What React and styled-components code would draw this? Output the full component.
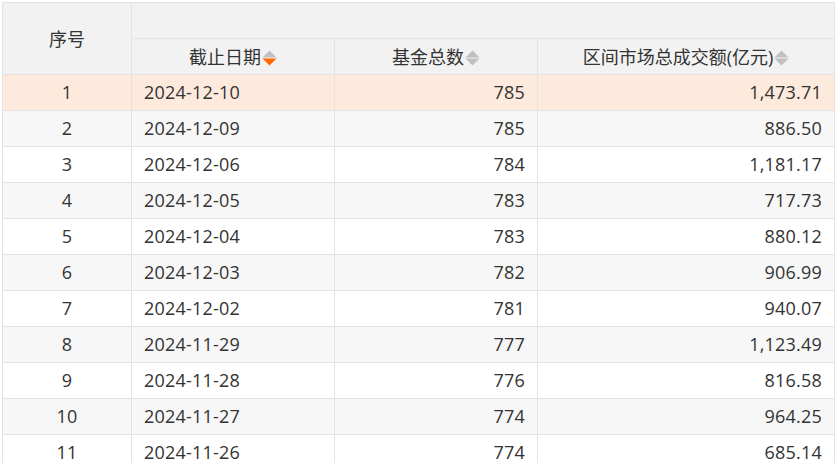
import styled, { createGlobalStyle } from 'styled-components'

const rows = [
  ['2024-12-10', '785', '1,473.71'],
  ['2024-12-09', '785', '886.50'],
  ['2024-12-06', '784', '1,181.17'],
  ['2024-12-05', '783', '717.73'],
  ['2024-12-04', '783', '880.12'],
  ['2024-12-03', '782', '906.99'],
  ['2024-12-02', '781', '940.07'],
  ['2024-11-29', '777', '1,123.49'],
  ['2024-11-28', '776', '816.58'],
  ['2024-11-27', '774', '964.25'],
  ['2024-11-26', '774', '685.14'],
]

function SortIcon({ active }) {
  return (
    <SortSvg viewBox="0 0 15 16" width="15" height="16">
      <path d="M0.5 7.5 L7.5 0.5 L14.5 7.5 Z" fill="#c0c0c0" />
      <path d="M0.5 8.5 L7.5 15.5 L14.5 8.5 Z" fill={active ? '#ff6a00' : '#c0c0c0'} />
    </SortSvg>
  )
}

export default function App() {
  return (
    <>
      <GlobalStyle />
      <Wrap>
        <Table>
          <colgroup>
            <col style={{ width: 129 }} />
            <col style={{ width: 203 }} />
            <col style={{ width: 203 }} />
            <col style={{ width: 297 }} />
          </colgroup>
          <thead>
            <tr>
              <Th rowSpan={2}>序号</Th>
              <Th colSpan={3}></Th>
            </tr>
            <tr>
              <Th>截止日期<SortIcon active /></Th>
              <Th>基金总数<SortIcon /></Th>
              <Th>区间市场总成交额(亿元)<SortIcon /></Th>
            </tr>
          </thead>
          <tbody>
            {rows.map((r, i) => (
              <Tr key={i} $highlight={i === 0} $striped={i % 2 === 1}>
                <Td $align="center">{i + 1}</Td>
                <Td $align="left">{r[0]}</Td>
                <Td $align="right">{r[1]}</Td>
                <Td $align="right">{r[2]}</Td>
              </Tr>
            ))}
          </tbody>
        </Table>
      </Wrap>
    </>
  )
}

const GlobalStyle = createGlobalStyle`
  body {
    margin: 0;
    background: #fff;
    font-family: "Open Sans", "Noto Sans CJK SC", sans-serif;
    overflow: hidden;
  }
`

const Wrap = styled.div`
  padding: 2px 0 0 2px;
  width: 836px;
  height: 463px;
  box-sizing: border-box;
  overflow: hidden;
`

const Table = styled.table`
  border-collapse: collapse;
  table-layout: fixed;
  width: 832px;
  border-top: 1px solid #e6e6e6;
  border-left: 1px solid #e6e6e6;
  color: #333;
  font-size: 18px;
`

const Th = styled.th`
  height: 33px;
  padding: 0 10px 2px;
  background: #f2f2f2;
  border: 1px solid #e3e3e3;
  font-weight: 400;
  text-align: center;
  white-space: nowrap;
  vertical-align: middle;
`

const SortSvg = styled.svg`
  vertical-align: -2px;
  margin-left: 1px;
`

const Tr = styled.tr`
  background: ${(p) => (p.$highlight ? '#fdeadd' : p.$striped ? '#f7f7f7' : '#fff')};
`

const Td = styled.td`
  height: 33px;
  padding: 0 12px 2px 12px;
  border: 1px solid #e3e3e3;
  text-align: ${(p) => p.$align};
  white-space: nowrap;
  vertical-align: middle;
  letter-spacing: 0.2px;
`
